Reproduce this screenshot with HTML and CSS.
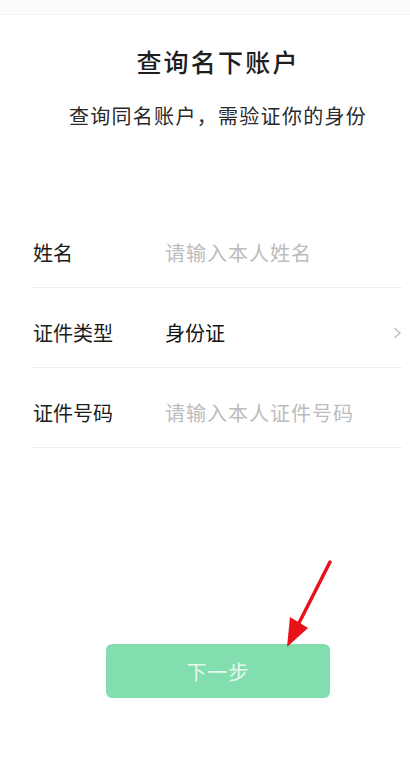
FILE: index.html
```html
<!DOCTYPE html>
<html lang="zh-CN">
<head>
<meta charset="utf-8">
<title>查询名下账户</title>
<link rel="stylesheet" href="styles.css">
</head>
<body>
<div class="page">
  <div class="topbar"></div>
  <h1 class="title">查询名下账户</h1>
  <p class="subtitle">查询同名账户，需验证你的身份</p>

  <div class="form">
    <div class="row">
      <span class="label">姓名</span>
      <span class="field placeholder">请输入本人姓名</span>
    </div>
    <div class="row">
      <span class="label">证件类型</span>
      <span class="field value">身份证</span>
      <svg class="chev" width="9" height="12" viewBox="0 0 9 12"><path d="M2 1.5 L7 6 L2 10.5" fill="none" stroke="#c0c0c0" stroke-width="1.6" stroke-linecap="round" stroke-linejoin="round"/></svg>
    </div>
    <div class="row">
      <span class="label">证件号码</span>
      <span class="field placeholder">请输入本人证件号码</span>
    </div>
  </div>

  <button class="next">下一步</button>

  <svg class="arrow" width="410" height="760" viewBox="0 0 410 760">
    <line x1="330" y1="562" x2="299" y2="623" stroke="#e8121a" stroke-width="3.5" stroke-linecap="round"/>
    <polygon points="287,647 308,628 290,617" fill="#e8121a"/>
  </svg>
</div>
</body>
</html>
```
FILE: styles.css
```css
* { box-sizing: border-box; }
html, body {
  margin: 0;
  padding: 0;
  background: #ffffff;
}
body {
  font-family: "Noto Sans CJK SC", "Noto Sans", sans-serif;
  color: #1c1c1c;
}
.page {
  position: relative;
  width: 410px;
  height: 760px;
  overflow: hidden;
}
.topbar {
  height: 15px;
  background: #fbfbfb;
  border-bottom: 1px solid #f2f2f2;
}
.title {
  margin: 30px 0 0;
  padding-left: 26px;
  font-size: 25px;
  line-height: 32px;
  font-weight: 500;
  letter-spacing: 2.2px;
  text-align: center;
  color: #1e1e1e;
}
.subtitle {
  margin: 25px 0 0;
  padding-left: 26px;
  font-size: 20px;
  line-height: 28px;
  font-weight: 400;
  text-align: center;
  color: #2a2a2a;
  letter-spacing: 1.3px;
}
.form {
  margin: 78px 8px 0 32px;
}
.row {
  display: flex;
  align-items: center;
  height: 80px;
  padding-top: 10px;
  border-bottom: 1px solid #eeeeee;
}
.label {
  width: 133px;
  padding-left: 1px;
  font-size: 20px;
  color: #1c1c1c;
}
.field {
  flex: 1;
  font-size: 20px;
}
.placeholder {
  color: #bcbcbc;
  letter-spacing: 1px;
}
.value {
  color: #141414;
  font-weight: 400;
}
.chev {
  margin-right: 0;
}
.next {
  display: block;
  margin: 196px 0 0 106px;
  width: 224px;
  height: 54px;
  border: none;
  border-radius: 6px;
  background: #82deae;
  color: #e6f8ee;
  font-family: "Noto Sans CJK SC", "Noto Sans", sans-serif;
  font-size: 20px;
  letter-spacing: 1px;
}
.arrow {
  position: absolute;
  left: 0;
  top: 0;
  pointer-events: none;
}
```
